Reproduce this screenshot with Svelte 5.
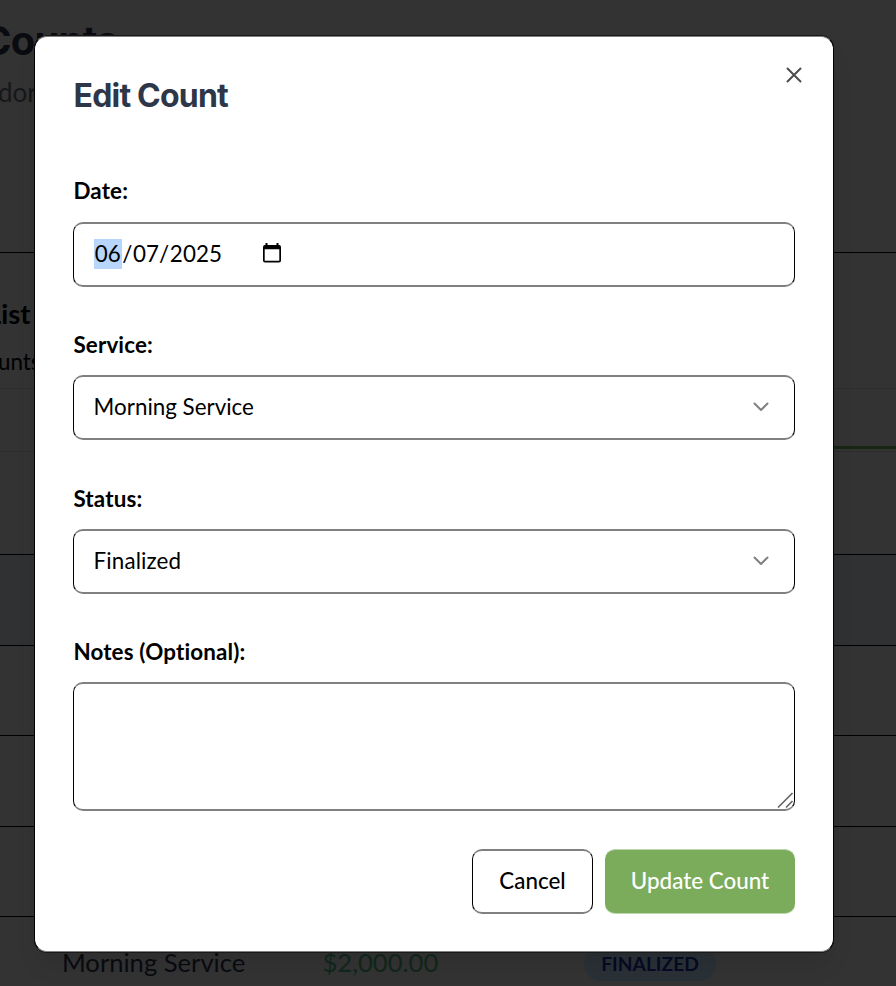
<script>
  let service = $state('Morning Service');
  let status = $state('Finalized');
  const rows = ['first', 'active', 'short', 'tall', 'short'];
</script>

{#snippet chevron()}
  <svg class="chevron" width="16" height="10" viewBox="0 0 16 10" fill="none" stroke="#808080" stroke-width="2" stroke-linecap="round" stroke-linejoin="round">
    <path d="M1.5 1.5 8 8l6.500-6.500" />
  </svg>
{/snippet}

<div class="screen">
  <main class="page" aria-hidden="true">
    <header>
      <h1>Counts</h1>
      <p>dor</p>
    </header>
    <section class="list-head">
      <h2>List</h2>
      <p>unts</p>
    </section>
    <div class="tabs"><span></span></div>
    <div class="rows">
      {#each rows as kind}
        <div class="row {kind}"></div>
      {/each}
      <div class="row last">
        <span class="name">Morning Service</span>
        <span class="amount">$2,000.00</span>
        <span class="pill">FINALIZED</span>
      </div>
    </div>
  </main>

  <div class="modal" role="dialog" aria-label="Edit Count">
    <div class="title">
      <h3>Edit Count</h3>
      <button class="close" aria-label="Close">
        <svg width="16" height="16" viewBox="0 0 16 16" fill="none" stroke="#4d4d4d" stroke-width="2" stroke-linecap="round">
          <path d="M1.500 1.500l13 13M14.500 1.500l-13 13" />
        </svg>
      </button>
    </div>

    <div class="label first-label">Date:</div>
    <div class="field">
      <span class="date"><mark>06</mark><i>/</i>07<i>/</i>2025</span>
      <svg class="calendar" width="20" height="20" viewBox="0 0 20 20">
        <path fill="#000" fill-rule="evenodd" d="M3.500 0h2v2h9V0h2v2h.5a2 2 0 0 1 2 2v13.500a2 2 0 0 1-2 2H3a2 2 0 0 1-2-2V4a2 2 0 0 1 2-2h.5zM2.700 6.200v11.200q0 .4.400.4h13.800q.4 0 .4-.4V6.200z" />
      </svg>
    </div>

    <div class="label">Service:</div>
    <div class="field select service"><span>{service}</span>{@render chevron()}</div>

    <div class="label">Status:</div>
    <div class="field select"><span class="wide">{status}</span>{@render chevron()}</div>

    <div class="label">Notes (Optional):</div>
    <div class="field notes">
      <svg width="17" height="17" viewBox="0 0 17 17" fill="none" stroke="#666" stroke-width="1.700">
        <path d="M1 15.500 15.500 1M9 15.500 15.500 9" />
      </svg>
    </div>

    <div class="actions">
      <button class="btn cancel">Cancel</button>
      <button class="btn update">Update Count</button>
    </div>
  </div>
</div>

<style>
  :global(body) { margin: 0; }
  .screen {
    position: relative;
    width: 896px;
    height: 986px;
    overflow: hidden;
    background: #333;
    font-family: Lato, sans-serif;
    font-variant-ligatures: none;
    color: #000;
  }
  * { box-sizing: border-box; }
  h1, h2, h3, p { margin: 0; white-space: nowrap; }

  .page { display: flex; flex-direction: column; }
  .page > * { flex: none; }
  header { height: 253px; padding-top: 16px; border-bottom: 1px solid #000; }
  h1 {
    margin-left: -18px;
    font: 700 40px/50px Inter, sans-serif;
    letter-spacing: -.8px;
    color: #090b10;
  }
  header p { margin: 10px 0 0 -2px; font-size: 26px; line-height: 32px; color: #161719; }
  .list-head { height: 136px; padding-top: 43px; border-bottom: 1px solid #2d2d2d; }
  h2 { margin-left: -13px; font-size: 27.500px; line-height: 36px; font-weight: 700; }
  .list-head p { margin: 16px 0 0 -2px; font-size: 22.400px; line-height: 28px; }
  .tabs { height: 63px; display: flex; align-items: flex-end; border-bottom: 1px solid #2d2d2d; }
  .tabs span { width: 100px; margin-left: auto; margin-bottom: 2px; height: 3px; background: #182511; }
  .row { border-bottom: 1px solid #000; }
  .row.first { height: 103px; }
  .row.short { height: 90px; }
  .row.tall { height: 91px; }
  .row.active { height: 91px; background: #2f3133; }
  .row.last {
    display: grid;
    grid-template-columns: 260.500px 261.500px 132px;
    padding: 28px 0 0 62px;
    border: 0;
    line-height: 34px;
    font-size: 25.600px;
    color: #090b10;
  }
  .row .amount { color: #11271b; }
  .row .pill {
    height: 34px;
    margin-top: 2px;
    border-radius: 17px;
    background: #2a3136;
    color: #060a24;
    font-size: 19.200px;
    font-weight: 700;
    text-align: center;
  }

  .modal {
    position: absolute;
    left: 34px;
    top: 36px;
    width: 800px;
    height: 916px;
    padding: 38px;
    border: 1px solid #000;
    border-top-color: #808080;
    border-bottom-color: #808080;
    border-radius: 13px;
    background: #fff;
    box-shadow: 0 -1px 0 #191919, 0 1px 0 #191919, 0 16px 24px -5px rgb(0 0 0 / 10%);
  }
  .title { display: flex; justify-content: space-between; height: 96px; }
  h3 {
    padding: 1px 0 0 .5px;
    font: 700 32px/40px Inter, sans-serif;
    letter-spacing: -.8px;
    color: #2d3748;
  }
  .close { width: 16px; height: 16px; padding: 0; margin: -8px -7px 0 0; border: 0; background: none; }
  .close svg { display: block; }
  .label {
    height: 51px;
    padding: 5px 0 0 .4px;
    font-size: 22.400px;
    letter-spacing: .15px;
    line-height: 32px;
    font-weight: 700;
    white-space: nowrap;
  }
  .first-label { padding-top: 4px; }
  .field {
    display: flex;
    align-items: center;
    height: 65px;
    margin-bottom: 37px;
    padding: 0 20px 2px 19.600px;
    border: solid #000;
    border-width: 2px 1px;
    border-top-color: #808080;
    border-bottom-color: #808080;
    border-radius: 10px;
    font-size: 22.400px;
    line-height: 30px;
  }
  .service { margin-bottom: 38px; }
  .wide { letter-spacing: .12px; }
  .date { display: flex; letter-spacing: .1px; }
  mark { background: #b8d5fb; color: #000; padding: 0 1.200px; }
  i { font-style: normal; padding-right: .5px; }
  .calendar { margin: 0 0 2px 39.700px; }
  .select { justify-content: space-between; }
  .chevron { margin-right: 5px; }
  .notes { height: 129px; margin-bottom: 38px; align-items: flex-end; justify-content: flex-end; padding: 0; }
  .actions { display: flex; justify-content: flex-end; gap: 12px; }
  .btn {
    height: 65px;
    border-radius: 10px;
    font: 500 22.400px/30px Lato, sans-serif;
    padding: 0 0 1px;
    white-space: nowrap;
  }
  .cancel {
    width: 121px;
    border: solid #000;
    border-width: 2px 1px;
    border-top-color: #808080;
    border-bottom-color: #808080;
    background: #fff;
    color: #000;
  }
  .update {
    width: 190px;
    border: solid #bdd6ad;
    border-width: 1px 0;
    background: #7bac5b;
    color: #fff;
  }
</style>
